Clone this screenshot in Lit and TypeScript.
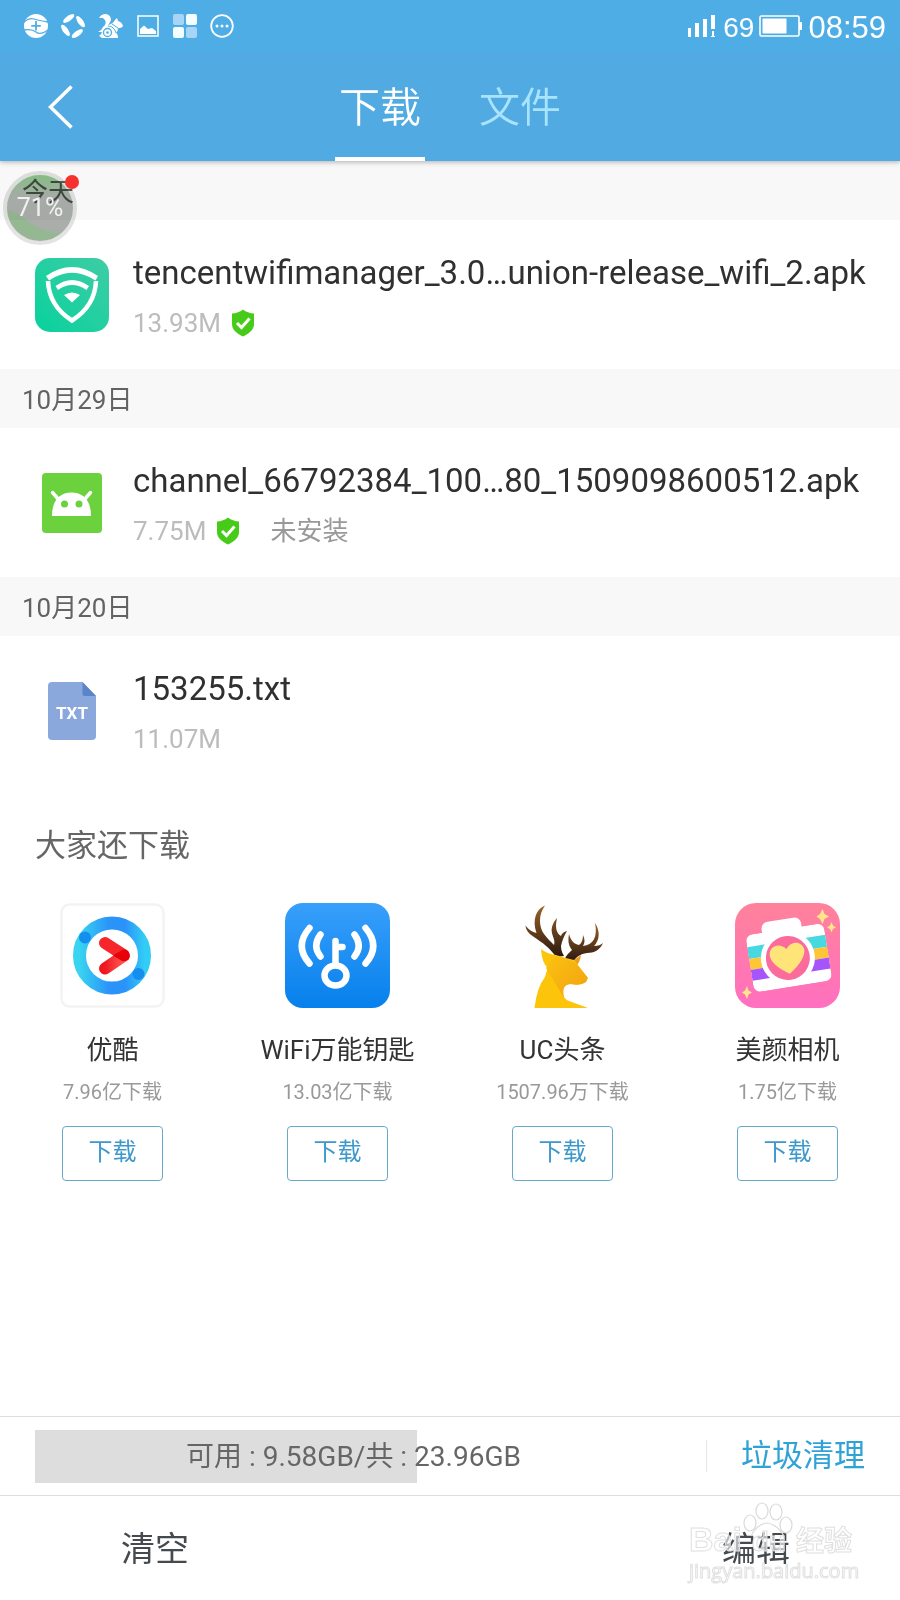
import { LitElement, html, css } from "lit";
import { customElement } from "lit/decorators.js";

interface FileItem {
  date: string;
  name: string;
  size: string;
  safe: boolean;
  note: string;
  icon: unknown;
}

interface AppItem {
  name: string;
  count: string;
  icon: unknown;
}

const wifiManagerIcon = html`<svg width="74" height="74" viewBox="0 0 74 74" aria-hidden="true">
  <defs><linearGradient id="wm" x1="1" y1="0" x2="0" y2="1"><stop offset="0" stop-color="#3fcca6"/><stop offset="1" stop-color="#08d29c"/></linearGradient></defs>
  <rect width="74" height="74" rx="15" fill="url(#wm)"/>
  <path d="M11 18Q37 0 63 18L60.500 22.500Q37 7 14 22.500Z" fill="#fff"/>
  <path d="M13 23Q14 48 37 62.500Q60 48 61 23" fill="none" stroke="#fff" stroke-width="4.500"/>
  <path d="M20.500 28Q37 16 54 28L51.500 32Q37 22 23 32Z" fill="#fff"/>
  <path d="M29 37Q37 32 45 37L37 44.500Z" fill="#fff"/>
</svg>`;

const androidIcon = html`<svg width="60" height="60" viewBox="0 0 60 60" aria-hidden="true">
  <rect width="60" height="60" rx="4" fill="#6bd13d"/>
  <path d="M10 43C10 27 18 19.500 29.500 19.500S49 27 49 43Z" fill="#fff"/>
  <path d="M10.500 19.500L17 27M48.500 19.500L42 27" stroke="#fff" stroke-width="3.500" stroke-linecap="round"/>
  <circle cx="22.500" cy="31" r="3.500" fill="#6bd13d"/><circle cx="37" cy="31" r="3.500" fill="#6bd13d"/>
</svg>`;

const txtIcon = html`<svg width="48" height="58" viewBox="0 0 48 58" aria-hidden="true">
  <path d="M4 0H34.500L48 14V54a4 4 0 0 1-4 4H4a4 4 0 0 1-4-4V4A4 4 0 0 1 4 0Z" fill="#8aa8db"/>
  <path d="M34.500 0L48 14H37a2.500 2.500 0 0 1-2.500-2.500Z" fill="#5a84cc"/>
  <text x="24" y="37" text-anchor="middle" font-family="Roboto, sans-serif" font-weight="700" font-size="17" fill="#fff">TXT</text>
</svg>`;

const shieldIcon = html`<svg width="24" height="28" viewBox="0 0 24 28" role="img" aria-label="安全">
  <path d="M12 0.500C15 3 19 4.300 23 4.500V15C23 21 17.500 25 12 27.500C6.500 25 1 21 1 15V4.500C5 4.300 9 3 12 0.500Z" fill="#46cb18"/>
  <path d="M6 14L10.500 18.500L18.500 9.500" fill="none" stroke="#fff" stroke-width="3"/>
</svg>`;

const youkuIcon = html`<svg width="105" height="105" viewBox="0 0 105 105" aria-hidden="true">
  <defs>
    <linearGradient id="yk" x1="0" y1="0.500" x2="1" y2="0.500"><stop offset="0" stop-color="#38d4f0"/><stop offset="0.450" stop-color="#2a94fa"/><stop offset="0.700" stop-color="#2a92fa"/><stop offset="1" stop-color="#32cdf4"/></linearGradient>
    <linearGradient id="ykr" x1="0" y1="0" x2="1" y2="0"><stop offset="0" stop-color="#f01820"/><stop offset="1" stop-color="#ff5a55"/></linearGradient>
  </defs>
  <rect x="1.500" y="1.500" width="102" height="102" rx="8" fill="#fff" stroke="#f3f3f3" stroke-width="2.500"/>
  <circle cx="52" cy="52.500" r="32.500" fill="none" stroke="url(#yk)" stroke-width="13"/>
  <circle cx="25" cy="34.500" r="6" fill="#148ff0"/><circle cx="78.500" cy="71" r="6" fill="#148ff0"/>
  <path d="M45 65.500L63.500 53" stroke="url(#ykr)" stroke-width="12" stroke-linecap="round"/>
  <path d="M45 40L63.500 52" stroke="#f5262c" stroke-width="12" stroke-linecap="round"/>
  <path d="M53 52.500L63 46.500a6 6 0 0 1 4 11L63 58.500Z" fill="#e80008"/>
</svg>`;

const wifiKeyIcon = html`<svg width="105" height="105" viewBox="0 0 105 105" aria-hidden="true">
  <defs><linearGradient id="wk" x1="0" y1="0" x2="0" y2="1"><stop offset="0" stop-color="#389ffb"/><stop offset="1" stop-color="#0680ec"/></linearGradient></defs>
  <rect width="105" height="105" rx="18" fill="url(#wk)"/>
  <g fill="none" stroke="#fff" stroke-width="6.500" stroke-linecap="round">
    <path d="M24.500 25Q9 43 24.500 60.500M35.500 31.500Q27 43 35.500 53.500"/>
    <path d="M80.500 25Q96 43 80.500 60.500M69.500 31.500Q78 43 69.500 53.500"/>
    <path d="M50.500 38V60M51 44H57.500"/>
    <ellipse cx="50.500" cy="72.500" rx="11" ry="10"/>
  </g>
</svg>`;

const deerIcon = html`<svg width="105" height="105" viewBox="-10 0 105 105" aria-hidden="true">
  <defs>
    <linearGradient id="dr" x1="0" y1="0" x2="0" y2="1"><stop offset="0" stop-color="#9a6426"/><stop offset="1" stop-color="#2c1810"/></linearGradient>
    <linearGradient id="dn" x1="0" y1="0" x2="1" y2="1"><stop offset="0" stop-color="#fdc212"/><stop offset="1" stop-color="#f0a010"/></linearGradient>
  </defs>
  <path d="M36 54C30 45 23 40 14 34C8 30 6 27 5.500 22.500C9 27 12 29 16.500 30C12 17 16 6 25 2.500C18 12 19 24 24 31C27 35 31 39 34 42C36 36 30 31 32 24C33 20 35 17 37 15C35 24 36 30 41 33C42 30 44 29 47 28C44 33 42 38 41 43C41 48 43 51 44 53Z" fill="url(#dr)"/>
  <path d="M45 56C46 52 50 49 52 47C48 42 48 37 49 31C51 38 54 41 59 42C62 40 63 36 63 32C65 36 65 40 63 43C73 42 78 34 75 20C81 29 79 38 74 43C78 43 81 42 83 40C80 47 74 50 67 50C60 51 56 54 54 58Z" fill="url(#dr)"/>
  <path d="M54 57L61 52Q60 59 57 62Z" fill="#eda01c"/>
  <path d="M21 46Q27 51 36 52Q45 55 54 57L67 74L66 79Q61 83 53 81Q43 80 43 88Q43 96 49 98L68 105H14.500Q17 84 25 74Q26 69 28 65Q22 61 21 46Z" fill="#fdc40c"/>
  <path d="M26 65Q37 83 44 95Q41 82 50 81Q60 83 66 79L68 75L56 60Q47 55 36 53Q28 60 26 65Z" fill="url(#dn)"/>
</svg>`;

const cameraIcon = html`<svg width="105" height="105" viewBox="0 0 105 105" aria-hidden="true">
  <defs>
    <linearGradient id="cm" x1="0" y1="0" x2="0" y2="1"><stop offset="0" stop-color="#ff829a"/><stop offset="1" stop-color="#ff70c0"/></linearGradient>
    <clipPath id="cb"><rect x="14" y="26" width="79" height="58" rx="7"/></clipPath>
  </defs>
  <rect width="105" height="105" rx="21" fill="url(#cm)"/>
  <g transform="rotate(-9 52.500 52.500)">
    <path d="M31 29V22a7 7 0 0 1 7-6H64a7 7 0 0 1 7 6V29Z" fill="#fff"/>
    <g clip-path="url(#cb)">
      <rect x="14" y="26" width="79" height="58" fill="#fff"/>
      <rect x="14" y="38" width="79" height="12" fill="#48d8e0"/>
      <rect x="14" y="50" width="79" height="11" fill="#fdc636"/>
      <rect x="14" y="61" width="79" height="11" fill="#a654fb"/>
    </g>
    <circle cx="52.500" cy="55" r="27" fill="#fff"/>
    <circle cx="52.500" cy="55" r="22" fill="#fb6b9c"/>
    <path d="M52 71Q34 59 35 49C36 40 47 38 52.500 46C58 38 69 40 70 49Q70 59 52 71Z" fill="#ffe579"/>
  </g>
  <path d="M87.500 6L89.500 11L94 13.500L89.500 16L87.500 21L85 16L81.500 13.500L85 11ZM96.500 19L98 22.500L101 24.500L98 26L96.500 29.500L95 26L92 24.500L95 22.500ZM12 83L13.500 87.500L17 89.500L13.500 91.500L12 96L10 91.500L7 89.500L10 87.500Z" fill="#ffe58a"/>
</svg>`;

const FILES: FileItem[] = [
  { date: "今天", name: "tencentwifimanager_3.0…union-release_wifi_2.apk", size: "13.93M", safe: true, note: "", icon: wifiManagerIcon },
  { date: "10月29日", name: "channel_66792384_100…80_1509098600512.apk", size: "7.75M", safe: true, note: "未安装", icon: androidIcon },
  { date: "10月20日", name: "153255.txt", size: "11.07M", safe: false, note: "", icon: txtIcon },
];

const APPS: AppItem[] = [
  { name: "优酷", count: "7.96亿下载", icon: youkuIcon },
  { name: "WiFi万能钥匙", count: "13.03亿下载", icon: wifiKeyIcon },
  { name: "UC头条", count: "1507.96万下载", icon: deerIcon },
  { name: "美颜相机", count: "1.75亿下载", icon: cameraIcon },
];

@customElement("app-root")
export class AppRoot extends LitElement {
  static styles = css`
    :host { display: flex; flex-direction: column; position: relative; min-height: 100vh; background: #fff; color: #333; font-family: Roboto, "Noto Sans CJK SC", sans-serif; }
    * { box-sizing: border-box; }
    svg { display: block; flex: none; }
    button { font: inherit; color: inherit; background: none; border: 0; padding: 0; cursor: pointer; }
    h2, p, ul { margin: 0; padding: 0; font-weight: 400; list-style: none; }
    .header { background: #51abe2; color: #fff; box-shadow: 0 1px 5px rgba(0, 0, 0, 0.3); position: relative; }
    .status { display: flex; align-items: center; justify-content: space-between; height: 52px; padding: 0 14px 0 24px; background: #4fade6; }
    .status-icons { display: flex; gap: 13px; }
    .status-right { display: flex; align-items: center; gap: 5px; font-family: "Liberation Sans", sans-serif; line-height: 32px; }
    .percent, .clock { padding-top: 3px; }
    .percent { font-size: 28px; }
    .clock { font-size: 31px; }
    .nav { display: grid; grid-template-columns: 1fr auto 1fr; height: 109px; }
    .back { justify-self: start; align-self: center; padding: 8px 44px 8px 48px; }
    .tabs { display: flex; gap: 50px; }
    .tab { width: 90px; padding-top: 8px; border-bottom: 4px solid transparent; font-size: 41px; line-height: 97px; color: #a9e4ff; white-space: nowrap; font-weight: 350; }
    .tab.active { color: #fff; border-color: #fff; }
    .date { height: 59px; padding: 0 22px; line-height: 63px; font-size: 26px; background: #f8f8f8; color: #636363; }
    .row { display: flex; align-items: center; height: 149px; padding: 0 35px; }
    .file-icon { display: flex; justify-content: center; width: 74px; margin-right: 24px; }
    .info { flex: 1; min-width: 0; padding-top: 5px; }
    .name { font-size: 33px; line-height: 46px; white-space: nowrap; color: #303030; }
    .meta { display: flex; align-items: center; gap: 10px; margin-top: 6px; font-size: 26px; line-height: 42px; color: #bcbcbc; }
    .note { margin-left: 20px; color: #999; }
    .more { padding: 37px 35px 0; font-size: 31px; line-height: 48px; color: #666; }
    .apps { display: grid; grid-template-columns: repeat(4, 1fr); margin-top: 33px; }
    .app { display: flex; flex-direction: column; align-items: center; }
    .app-name { margin-top: 22px; font-size: 26px; line-height: 40px; white-space: nowrap; }
    .count { margin-top: 6px; font-size: 20px; line-height: 32px; color: #999; white-space: nowrap; }
    .get { width: 101px; height: 55px; margin-top: 18px; padding-bottom: 4px; border: 1px solid #67a9ca; border-radius: 4px; font-size: 24px; line-height: 48px; color: #3d98cc; }
    .footer { margin-top: auto; }
    .storage { display: flex; align-items: center; height: 80px; padding: 0 35px; border: solid #dedede; border-width: 1px 0; }
    .usage { flex: 1; height: 53px; background: linear-gradient(#ddd, #ddd) no-repeat left / 60% 100%; text-align: center; font-size: 28px; line-height: 53px; color: #666; white-space: nowrap; }
    .clean { margin-left: 34px; height: 32px; padding-left: 34px; border-left: 1px solid #e6e6e6; font-size: 31px; line-height: 32px; color: #2fa3d6; }
    .actions { display: flex; justify-content: space-between; height: 104px; padding: 0 110px 4px 121px; font-size: 34px; color: #444a4e; }
    .bubble { position: absolute; left: 3px; top: 171px; width: 74px; height: 74px; mix-blend-mode: multiply; }
    .bubble-text { position: absolute; left: 3px; top: 171px; width: 74px; text-align: center; font-size: 25px; line-height: 74px; color: #f1f1f1; }
    .dot { position: absolute; left: 65px; top: 175px; width: 14px; height: 14px; border-radius: 50%; background: #f5322e; }
    .mark { position: absolute; right: 48px; bottom: 17px; width: 163px; color: rgba(255, 255, 255, 0.6); -webkit-text-stroke: 1px #e0e0e0; pointer-events: none; }
    .mark-top { display: flex; justify-content: space-between; align-items: baseline; font-family: "Liberation Sans", "Noto Sans CJK SC", sans-serif; font-size: 28px; line-height: 34px; font-weight: 700; }
    .mark-latin { font-size: 34px; }
    .mark-url { font-family: "Open Sans", sans-serif; font-size: 20px; line-height: 24px; color: rgba(255, 255, 255, 0.8); }
    .paw { position: absolute; left: 54px; top: -20px; }
  `;

  render() {
    return html`
      <header class="header">
        <div class="status">
          <div class="status-icons">
            <svg width="24" height="24" viewBox="0 0 24 24" aria-hidden="true"><circle cx="12" cy="12" r="12" fill="#fff"/><path d="M0 8Q5 3.500 10 5T24 8M0 16Q8 14.500 12 18T24 16" fill="none" stroke="#4fade6" stroke-width="1.300"/><path d="M12 7V16.500M7.200 11.800H16.800" stroke="#4fade6" stroke-width="1.800"/></svg>
            <svg width="24" height="24" viewBox="0 0 24 24" aria-hidden="true"><g fill="#fff"><path d="M2.500 6Q7 0 12.500 0Q14.500 2 11.500 4.500Q8 8.500 3 9Q1.500 8 2.500 6Z"/><path d="M18 2.500Q24 7 24 12.500Q22 14.500 19.500 11.500Q15.500 8 15 3Q16 1.500 18 2.500Z"/><path d="M21.500 18Q17 24 11.500 24Q9.500 22 12.500 19.500Q16 15.500 21 15Q22.500 16 21.500 18Z"/><path d="M6 21.500Q0 17 0 11.500Q2 9.500 4.500 12.500Q8.500 16 9 21Q8 22.500 6 21.500Z"/></g></svg>
            <svg width="25" height="24" viewBox="0 0 25 24" aria-hidden="true"><path d="M1 4Q3 0 8 0Q13 1 13 6Q12 9 10 11Q15 10 17 6L19 4L20 7Q24 8 25 12Q24 14 20 14Q20 17 18 19Q20 20 20 24H4Q3 23 1 22Q4 20 4 18L0 18Q4 16 5 13Q9 10 7 6Q5 3 1 4Z" fill="#fff"/><circle cx="9.500" cy="18.500" r="4" fill="none" stroke="#4fade6" stroke-width="1.300"/><circle cx="9.500" cy="18.500" r="1.300" fill="#4fade6"/><path d="M10 12Q16 12 18 19M14 10L20 14" fill="none" stroke="#4fade6"/></svg>
            <svg width="24" height="24" viewBox="0 0 24 24" aria-hidden="true"><rect x="2" y="2" width="20" height="20" fill="none" stroke="#fff" stroke-width="1.500"/><path d="M4 20V15L8 11.500L12 15L16 14L20 17V20Z" fill="#fff"/></svg>
            <svg width="24" height="24" viewBox="0 0 24 24" aria-hidden="true"><rect width="11" height="11" rx="2" fill="#a6d5f5"/><rect x="13" width="11" height="11" rx="2" fill="#f4feff"/><rect y="13" width="11" height="11" rx="2" fill="#f4feff"/><rect x="13" y="13" width="11" height="11" rx="2" fill="#a6d5f5"/></svg>
            <svg width="24" height="24" viewBox="0 0 24 24" aria-hidden="true"><circle cx="12" cy="12" r="10.800" fill="none" stroke="#fff" stroke-width="1.800"/><g fill="#fff"><circle cx="7" cy="12" r="1.500"/><circle cx="12" cy="12" r="1.500"/><circle cx="17" cy="12" r="1.500"/></g></svg>
          </div>
          <div class="status-right">
            <svg width="30" height="24" viewBox="1 0 30 24" aria-hidden="true"><path d="M0 14H4V23H0ZM8 9H12V23H8ZM16 5H20V23H16ZM24 1H28V15H24ZM25 17H27V22H28V23H24V22H25Z" fill="#fff"/></svg>
            <span class="percent">69</span>
            <svg width="44" height="22" viewBox="0 0 44 22" aria-hidden="true"><rect x="1" y="1" width="39" height="20" rx="1.500" fill="none" stroke="#fff" stroke-width="1.600"/><rect x="3.500" y="3.500" width="24" height="15" fill="#fff"/><path d="M40 7H43V15H40Z" fill="#fff"/></svg>
            <span class="clock">08:59</span>
          </div>
        </div>
        <nav class="nav">
          <button class="back" aria-label="返回"><svg width="26" height="44" viewBox="0 0 26 44" aria-hidden="true"><path d="M23.500 1.500L2.500 22L23.500 42.500" fill="none" stroke="#fff" stroke-width="3.500"/></svg></button>
          <div class="tabs">
            <button class="tab active">下载</button>
            <button class="tab">文件</button>
          </div>
        </nav>
      </header>
      <main>
        ${FILES.map((f) => html`
          <h2 class="date">${f.date}</h2>
          <div class="row">
            <div class="file-icon">${f.icon}</div>
            <div class="info">
              <p class="name">${f.name}</p>
              <div class="meta"><span>${f.size}</span>${f.safe ? shieldIcon : ""}${f.note ? html`<span class="note">${f.note}</span>` : ""}</div>
            </div>
          </div>`)}
        <h2 class="more">大家还下载</h2>
        <ul class="apps">
          ${APPS.map((a) => html`
            <li class="app">
              ${a.icon}
              <p class="app-name">${a.name}</p>
              <p class="count">${a.count}</p>
              <button class="get">下载</button>
            </li>`)}
        </ul>
      </main>
      <footer class="footer">
        <div class="storage">
          <div class="usage">可用 : 9.58GB/共 : 23.96GB</div>
          <button class="clean">垃圾清理</button>
        </div>
        <div class="actions"><button>清空</button><button>编辑</button></div>
      </footer>
      <svg class="bubble" viewBox="0 0 74 74" aria-hidden="true">
        <defs><linearGradient id="bg" x1="0" y1="0" x2="0" y2="1"><stop offset="0" stop-color="#86c484"/><stop offset="0.350" stop-color="#acb0ac"/><stop offset="1" stop-color="#a9ada9"/></linearGradient></defs>
        <circle cx="37" cy="37" r="35" fill="url(#bg)" stroke="#e2e4e2" stroke-width="4"/>
        <path d="M4.500 39Q16 42 24 50Q34 57 48 61Q56 63 59 61A33 33 0 0 1 4.500 39Z" fill="#94b892"/>
      </svg>
      <span class="bubble-text">71%</span>
      <span class="dot"></span>
      <div class="mark" aria-hidden="true">
        <svg class="paw" width="50" height="34" viewBox="0 0 50 34"><g fill="#fff" fill-opacity="0.700" stroke="#dadada" stroke-width="1.200"><ellipse cx="7" cy="21" rx="6" ry="8"/><ellipse cx="19" cy="9" rx="6" ry="8"/><ellipse cx="33" cy="10" rx="6" ry="8"/><ellipse cx="43" cy="23" rx="6" ry="8"/><path d="M8 34Q14 22 24 21Q34 22 41 34" fill="none"/></g></svg>
        <div class="mark-top"><span class="mark-latin">Bai</span><span>du</span><span>经验</span></div>
        <div class="mark-url">jingyan.baidu.com</div>
      </div>
    `;
  }
}
